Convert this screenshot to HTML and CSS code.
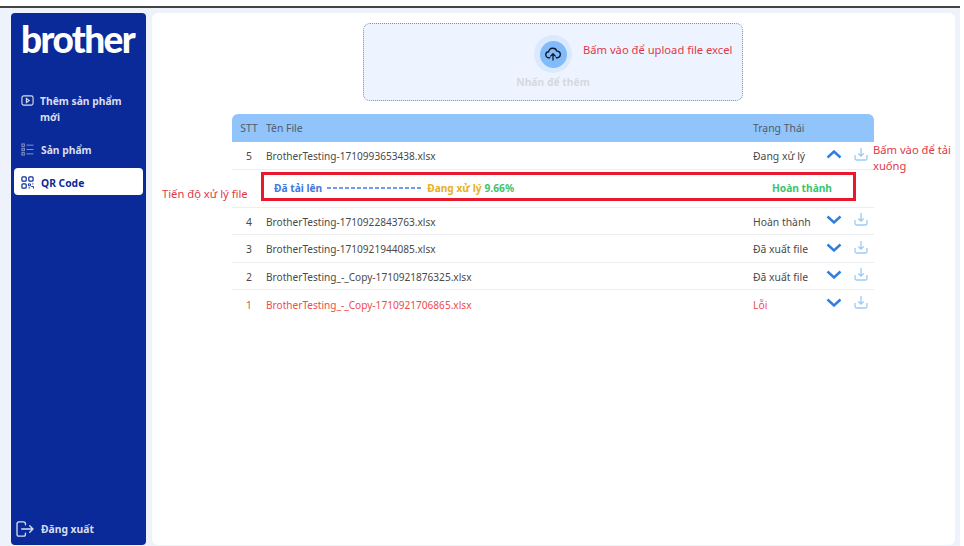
FILE: index.html
```html
<!DOCTYPE html>
<html lang="vi">
<head>
    <meta charset="UTF-8">
    <meta name="viewport" content="width=device-width, initial-scale=1.0">
    <title>Brother - QR Code</title>
    <link rel="stylesheet" href="styles.css">
</head>
<body>
    <div class="top-line"></div>
    <div class="app">
        <div class="sidebar">
            <div class="logo">brother</div>
            <div class="menu">
                <div class="menu-item first">
                    <svg class="menu-icon" viewBox="0 0 14 12" fill="none" stroke="currentColor" stroke-width="1.2"><rect x="1" y="1" width="12" height="10" rx="2"/><path d="M5.8 3.8 8.8 6 5.8 8.2Z"/></svg>
                    <span>Thêm sản phẩm mới</span>
                </div>
                <div class="menu-item">
                    <svg class="menu-icon dim" viewBox="0 0 14 14" fill="none" stroke="currentColor" stroke-width="1"><rect x="1" y="1" width="2.6" height="2.6"/><rect x="1" y="5.7" width="2.6" height="2.6"/><rect x="1" y="10.4" width="2.6" height="2.6"/><path d="M6 2.3h7.5M6 7h7.5M6 11.7h7.5"/></svg>
                    <span>Sản phẩm</span>
                </div>
                <div class="menu-item active">
                    <svg class="menu-icon" viewBox="0 0 14 14" fill="none" stroke="currentColor" stroke-width="1.3"><rect x="1" y="1" width="4.6" height="4.6" rx="1"/><rect x="8.400" y="1" width="4.600" height="4.600" rx="1"/><rect x="1" y="8.400" width="4.600" height="4.600" rx="1"/><path d="M8 8.500h2.200v2H8zM12 8.500h1.400M11 11.300h2.400v2.200M8 12.800h1.800" stroke-width="1"/></svg>
                    <span>QR Code</span>
                </div>
            </div>
            <div class="logout">
                <svg class="logout-icon" viewBox="0 0 19 17" fill="none" stroke="currentColor" stroke-width="1.4" stroke-linecap="round" stroke-linejoin="round"><path d="M10 4V3a2 2 0 0 0-2-2H3a2 2 0 0 0-2 2v11a2 2 0 0 0 2 2h5a2 2 0 0 0 2-2v-1"/><path d="M6 8.5h12M14.5 5l3.5 3.5-3.5 3.5"/></svg>
                <span>Đăng xuất</span>
            </div>
        </div>
        <div class="main">
            <div class="upload">
                <div class="upload-circle">
                    <div class="upload-inner">
                        <svg width="16" height="14" viewBox="0 0 17 15" fill="none" stroke="#10182a" stroke-width="1.4" stroke-linecap="round" stroke-linejoin="round"><path d="M5 11.5H4.2a3.2 3.2 0 0 1-.4-6.4 4.6 4.6 0 0 1 8.9-.6 3.5 3.5 0 0 1 .3 7H12"/><path d="M8.5 14V7.5M6 9.800l2.500-2.500L11 9.800"/></svg>
                    </div>
                </div>
                <div class="upload-text">Nhấn để thêm</div>
            </div>
            <div class="note note-upload">Bấm vào để upload file excel</div>

            <div class="table">
                <div class="row head">
                    <div class="stt">STT</div>
                    <div>Tên File</div>
                    <div>Trạng Thái</div>
                </div>
                <div class="row">
                    <div class="stt">5</div>
                    <div class="file">BrotherTesting-1710993653438.xlsx</div>
                    <div>Đang xử lý</div>
                    <svg class="chevron" viewBox="0 0 16 9"><path d="M1.500 7.500 8 1.500l6.500 6"/></svg>
                    <svg class="download" viewBox="0 0 14 14"><path d="M1 8v3.500a1.500 1.500 0 0 0 1.500 1.500h9a1.500 1.500 0 0 0 1.500-1.500V8M7 1v8M4.300 6.500 7 9.200l2.700-2.700"/></svg>
                </div>
                <div class="progress-row">
                    <div class="progress">
                        <span class="step-up">Đã tải lên</span>
                        <span class="dashes"></span>
                        <span class="step-doing">Đang xử lý</span>
                        <span class="percent">9.66%</span>
                        <span class="step-done">Hoàn thành</span>
                    </div>
                </div>
                <div class="row">
                    <div class="stt">4</div>
                    <div class="file">BrotherTesting-1710922843763.xlsx</div>
                    <div>Hoàn thành</div>
                    <svg class="chevron" viewBox="0 0 16 9"><path d="M1.500 1.500 8 7.500l6.500-6"/></svg>
                    <svg class="download" viewBox="0 0 14 14"><path d="M1 8v3.500a1.500 1.500 0 0 0 1.500 1.500h9a1.500 1.500 0 0 0 1.500-1.500V8M7 1v8M4.300 6.500 7 9.200l2.700-2.700"/></svg>
                </div>
                <div class="row">
                    <div class="stt">3</div>
                    <div class="file">BrotherTesting-1710921944085.xlsx</div>
                    <div>Đã xuất file</div>
                    <svg class="chevron" viewBox="0 0 16 9"><path d="M1.500 1.500 8 7.500l6.500-6"/></svg>
                    <svg class="download" viewBox="0 0 14 14"><path d="M1 8v3.500a1.500 1.500 0 0 0 1.500 1.500h9a1.500 1.500 0 0 0 1.500-1.500V8M7 1v8M4.300 6.500 7 9.200l2.700-2.700"/></svg>
                </div>
                <div class="row">
                    <div class="stt">2</div>
                    <div class="file">BrotherTesting_-_Copy-1710921876325.xlsx</div>
                    <div>Đã xuất file</div>
                    <svg class="chevron" viewBox="0 0 16 9"><path d="M1.500 1.500 8 7.500l6.500-6"/></svg>
                    <svg class="download" viewBox="0 0 14 14"><path d="M1 8v3.500a1.500 1.500 0 0 0 1.500 1.500h9a1.500 1.500 0 0 0 1.500-1.500V8M7 1v8M4.300 6.500 7 9.200l2.700-2.700"/></svg>
                </div>
                <div class="row error">
                    <div class="stt">1</div>
                    <div class="file">BrotherTesting_-_Copy-1710921706865.xlsx</div>
                    <div>Lỗi</div>
                    <svg class="chevron" viewBox="0 0 16 9"><path d="M1.500 1.500 8 7.500l6.500-6"/></svg>
                    <svg class="download" viewBox="0 0 14 14"><path d="M1 8v3.500a1.500 1.500 0 0 0 1.500 1.500h9a1.500 1.500 0 0 0 1.500-1.500V8M7 1v8M4.300 6.500 7 9.200l2.700-2.700"/></svg>
                </div>
            </div>

            <div class="note note-progress">Tiến độ xử lý file</div>
            <div class="note note-download">Bấm vào để tải xuống</div>
        </div>
    </div>
</body>
</html>
```

FILE: styles.css
```css
body, html {
    font-family: "Noto Sans", Arial, sans-serif;
    margin: 0;
    padding: 0;
    height: 100%;
    overflow: hidden;
    background-color: white;
}
.top-line {
    width: 960px;
    height: 2px;
    margin-top: 6px;
    background-color: #444;
}
.app {
    display: flex;
    gap: 6px;
    box-sizing: border-box;
    width: 960px;
    height: 538px;
    padding: 5px 5px 1px 11px;
    background-color: #eef2fa;
}
.sidebar {
    display: flex;
    flex-direction: column;
    box-sizing: border-box;
    width: 135px;
    padding: 0 3px 8px;
    background-color: #0a2a99;
    border-radius: 4px;
    color: #d8deef;
    font-size: 10.3px;
    font-weight: 700;
}
.logo {
    margin: 4px 0 0 7px;
    color: white;
    font-family: "Lato", sans-serif;
    font-size: 37px;
    font-weight: 900;
    line-height: 44px;
    letter-spacing: -1.6px;
}
.menu {
    margin-top: 27px;
}
.menu-item {
    display: flex;
    align-items: flex-start;
    gap: 7px;
    padding: 5px 8px 5px 7px;
    margin-bottom: 7px;
    line-height: 16px;
}
.menu-item.first {
    gap: 6px;
}
.menu-item.active {
    margin-top: -2px;
    padding: 7px 8px 4px 7px;
    height: 27px;
    box-sizing: border-box;
    background-color: white;
    border-radius: 4px;
    color: #0a2a99;
}
.menu-icon {
    flex: none;
    width: 13px;
    height: 13px;
    margin-top: 1px;
}
.menu-icon.dim {
    color: #8e9ccc;
}
.logout {
    display: flex;
    align-items: center;
    gap: 7px;
    margin-top: auto;
    padding-left: 2px;
}
.logout-icon {
    width: 18px;
    height: 16px;
}
.main {
    position: relative;
    flex: 1;
    padding-top: 10px;
    background-color: white;
    border-radius: 6px;
}
.upload {
    display: flex;
    flex-direction: column;
    align-items: center;
    box-sizing: border-box;
    width: 380px;
    height: 78px;
    margin-left: 211px;
    padding-top: 11px;
    background-color: #eef4ff;
    border: 1px dotted #7f8bb8;
    border-radius: 7px;
}
.upload-circle {
    display: flex;
    align-items: center;
    justify-content: center;
    width: 38px;
    height: 38px;
    background-color: #dbe9fe;
    border-radius: 50%;
}
.upload-inner {
    display: flex;
    align-items: center;
    justify-content: center;
    width: 27px;
    height: 27px;
    background-color: #82bbfa;
    border-radius: 50%;
}
.upload-text {
    margin-top: 1px;
    color: #d5d9e0;
    font-size: 10.3px;
    font-weight: 700;
    line-height: 16px;
}
.table {
    width: 642px;
    margin: 13px 0 0 80px;
    color: #4a4a4a;
    font-size: 10.4px;
}
.row {
    display: grid;
    grid-template-columns: 34px 487px 71px 20px 26px;
    align-items: center;
    box-sizing: border-box;
    height: 27.5px;
    padding-top: 2px;
    border-bottom: 1px solid #eceef2;
}
.row.head {
    height: 28px;
    padding-top: 0;
    background-color: #90c4fb;
    border-bottom: none;
    border-radius: 6px 6px 0 0;
    color: #505a6a;
}
.row.error {
    color: #ee4b4b;
    border-bottom: none;
}
.stt {
    text-align: center;
}
.file {
    font-size: 10.1px;
}
.chevron {
    width: 16px;
    height: 9px;
    margin: 0 0 4px 2px;
    fill: none;
    stroke: #2f7de1;
    stroke-width: 2.4;
}
.download {
    width: 14px;
    height: 14px;
    margin: 0 0 5px 10px;
    fill: none;
    stroke: #9ccaf8;
    stroke-width: 1.3;
}
.progress-row {
    box-sizing: border-box;
    height: 38px;
    padding: 2.5px 18px 0 29px;
    border-bottom: 1px solid #eceef2;
}
.progress {
    display: flex;
    align-items: center;
    box-sizing: border-box;
    height: 29px;
    padding: 2px 21px 0 10px;
    border: 3px solid #e8192c;
    font-size: 10.2px;
    font-weight: 700;
}
.step-up {
    color: #3f78e0;
}
.dashes {
    flex: none;
    width: 95px;
    height: 2px;
    margin: 0 5px;
    background: repeating-linear-gradient(90deg, #6d9cf0 0 4px, transparent 4px 6px);
}
.step-doing {
    color: #e8b020;
}
.percent {
    margin-left: 3px;
    color: #3cc46a;
}
.step-done {
    margin-left: auto;
    color: #3cc46a;
}
.note {
    position: absolute;
    color: #e0374a;
    font-size: 11.2px;
    line-height: 16px;
}
.note-upload {
    left: 431px;
    top: 29px;
}
.note-progress {
    left: 10px;
    top: 173px;
}
.note-download {
    left: 721px;
    top: 129px;
    width: 84px;
}
```
